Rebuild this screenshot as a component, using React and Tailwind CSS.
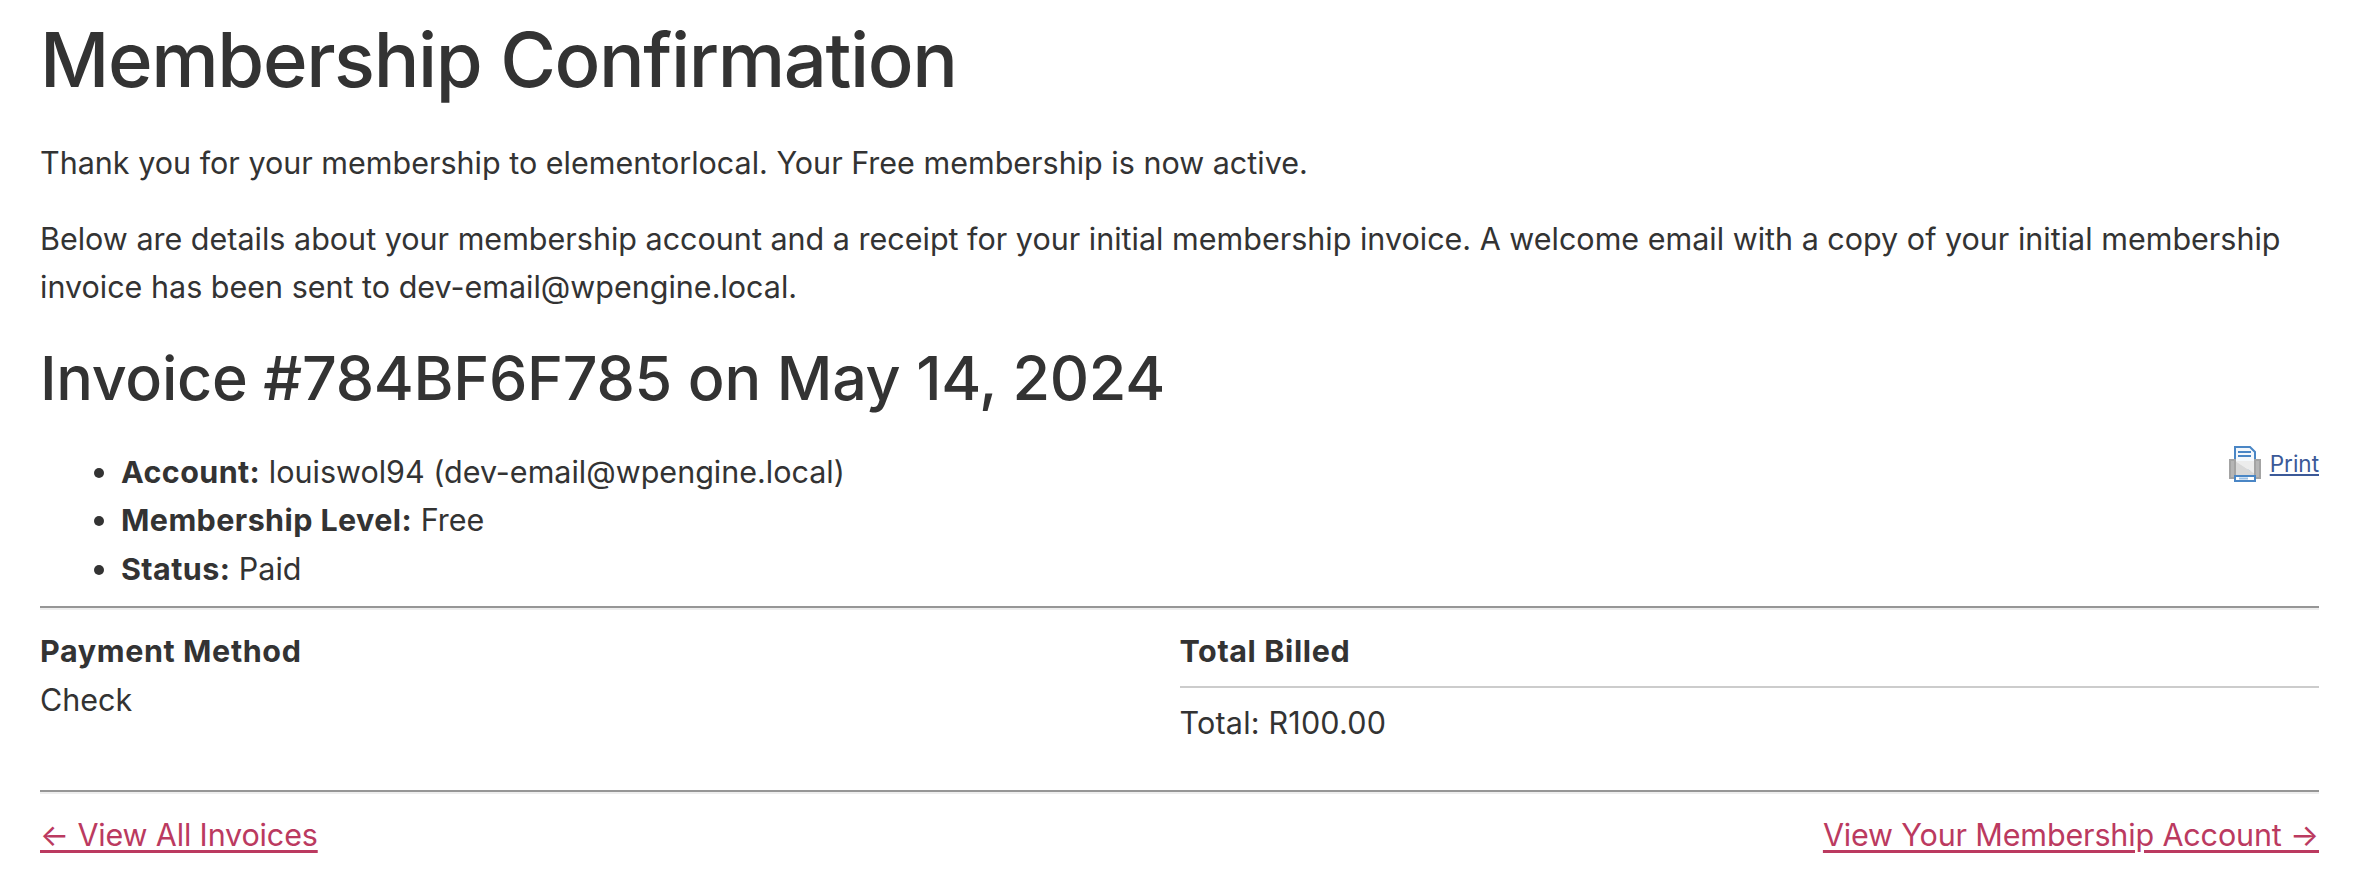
import React from "react";

const PrinterIcon = () => (
  <svg width="32" height="36" viewBox="0 0 32 36" className="shrink-0">
    <rect x="1" y="14" width="30" height="18" fill="#d4d4d4" stroke="#a3a3a3" strokeWidth="2" />
    <path d="M6 1h15l5 5v18H6z" fill="#f4f8fc" stroke="#4a86c5" strokeWidth="2" />
    <path d="M9 6h13M9 10h13" stroke="#4a86c5" strokeWidth="2" />
    <path d="M6 15h1l19 13v2H6z" fill="#d8d8d8" />
    <path d="M6 15l20 13V15z" fill="#ececec" />
    <rect x="1" y="14" width="5" height="18" fill="#b5b5b5" stroke="#a3a3a3" strokeWidth="2" />
    <rect x="26" y="14" width="5" height="18" fill="#b5b5b5" stroke="#a3a3a3" strokeWidth="2" />
    <rect x="6" y="30" width="20" height="5" fill="#fff" stroke="#4a86c5" strokeWidth="2" />
    <path d="M10 32.5h9" stroke="#9cc0e4" strokeWidth="2" />
  </svg>
);

const Rule = ({ className }) => (
  <hr className={"h-[4px] border-t-[2px] border-b-[2px] border-x-0 border-t-[#969696] border-b-[#eeeeee] " + className} />
);

export default function App() {
  return (
    <div className="min-h-screen bg-white pl-[40px] pr-[51px] text-[#333] text-[30.5px] leading-[48.4px] font-['Inter',sans-serif]">
      <h1 className="pt-[20px] text-[76px] leading-[78px] font-medium tracking-[-1.4px]">Membership Confirmation</h1>
      <p className="mt-[41px]">Thank you for your membership to elementorlocal. Your Free membership is now active.</p>
      <p className="mt-[27.5px]">
        Below are details about your membership account and a receipt for your initial membership invoice. A welcome email with a copy of your initial membership invoice has been sent to dev-email@wpengine.local.
      </p>
      <h2 className="mt-[30px] text-[61px] leading-[72px] font-medium tracking-[-0.3px]">Invoice #784BF6F785 on May 14, 2024</h2>

      <div className="mt-[34px] flex items-start justify-between">
        <ul className="list-disc pl-[81px]">
          <li><strong className="font-bold tracking-[0.4px]">Account:</strong> louiswol94 (dev-email@wpengine.local)</li>
          <li><strong className="font-bold tracking-[0.4px]">Membership Level:</strong> Free</li>
          <li><strong className="font-bold tracking-[0.4px]">Status:</strong> Paid</li>
        </ul>
        <a href="#" className="-mt-[2px] flex items-center gap-[9px] text-[22.5px] leading-[36px] text-[#3b5998] underline">
          <PrinterIcon />
          Print
        </a>
      </div>

      <Rule className="mt-[13.5px]" />
      <div className="pt-[17px] grid grid-cols-2">
        <div>
          <div className="font-bold tracking-[0.6px]">Payment Method</div>
          <div>Check</div>
        </div>
        <div>
          <div className="font-bold tracking-[0.6px] border-b-2 border-[#ccc] pb-[10px]">Total Billed</div>
          <div className="pt-[11px] tracking-[0.2px]">Total: R100.00</div>
        </div>
      </div>

      <Rule className="mt-[43px]" />
      <div className="pt-[16.5px] flex justify-between">
        <a href="#" className="text-[#bb3a60] underline decoration-[3px] underline-offset-[4px] tracking-[-0.15px]">← View All Invoices</a>
        <a href="#" className="text-[#bb3a60] underline decoration-[3px] underline-offset-[4px] tracking-[-0.15px]">View Your Membership Account →</a>
      </div>
    </div>
  );
}
